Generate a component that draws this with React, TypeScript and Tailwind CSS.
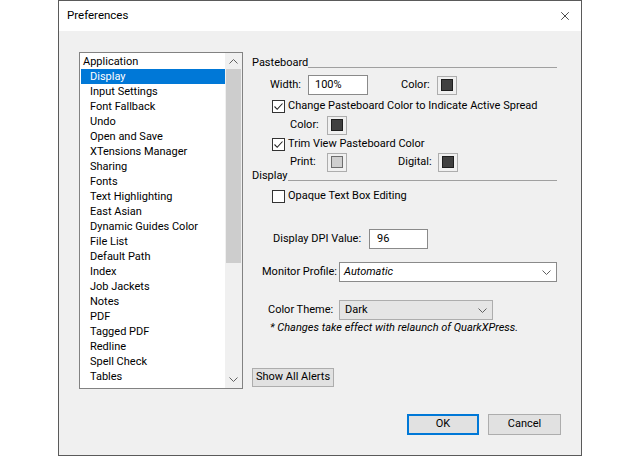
import { X } from "lucide-react";

const items = [
  "Display",
  "Input Settings",
  "Font Fallback",
  "Undo",
  "Open and Save",
  "XTensions Manager",
  "Sharing",
  "Fonts",
  "Text Highlighting",
  "East Asian",
  "Dynamic Guides Color",
  "File List",
  "Default Path",
  "Index",
  "Job Jackets",
  "Notes",
  "PDF",
  "Tagged PDF",
  "Redline",
  "Spell Check",
  "Tables",
];

function Chevron({ up = false, className = "" }: { up?: boolean; className?: string }) {
  return (
    <svg width="9" height="5" viewBox="0 0 9 5" className={className}>
      <path
        d={up ? "M0.5 4.5 L4.5 0.5 L8.5 4.5" : "M0.5 0.5 L4.5 4.5 L8.5 0.5"}
        fill="none"
        stroke="#606060"
        strokeWidth="1"
      />
    </svg>
  );
}

function Check({ checked }: { checked: boolean }) {
  return (
    <div className="w-[13px] h-[13px] border border-[#333] bg-white flex items-center justify-center">
      {checked && (
        <svg width="11" height="11" viewBox="0 0 11 11">
          <path d="M1.5 5.5 L4.2 8.3 L9.5 2.5" fill="none" stroke="#222" strokeWidth="1.1" />
        </svg>
      )}
    </div>
  );
}

function Swatch({ light = false }: { light?: boolean }) {
  return (
    <div className="w-[20px] h-[19px] border border-[#adadad] bg-[#f0f0f0] flex items-center justify-center">
      <div
        className={`w-[12px] h-[12px] border ${
          light ? "bg-[#cfcfcf] border-[#6d6d6d]" : "bg-[#404040] border-[#1e1e1e]"
        }`}
      />
    </div>
  );
}

function Header({ label }: { label: string }) {
  return (
    <div className="h-[16px] flex items-start">
      <span className="leading-[16px]">{label}</span>
      <div className="flex-1 h-[13px] border-b border-[#a0a0a0]" />
    </div>
  );
}

export default function App() {
  return (
    <div className="w-[640px] h-[457px] bg-white font-['Roboto',sans-serif] text-[11px] text-black">
      <div className="ml-[58px] w-[524px] h-[456px] border border-[#5a5a5a] flex flex-col">
        <div className="h-[30px] bg-white flex items-center justify-between pl-[8px] pr-[9px]">
          <span className="text-[11.5px]">Preferences</span>
          <X className="w-[14px] h-[14px] text-black" strokeWidth={1.2} />
        </div>

        <div className="flex-1 bg-[#f0f0f0] pt-[21px] pl-[20px] flex flex-col">
          <div className="flex">
            {/* category list */}
            <div className="w-[164px] h-[337px] border border-[#828282] bg-white flex overflow-hidden">
              <div className="flex-1 pl-[1px] pt-[1px] overflow-hidden">
                <div className="h-[15px] leading-[15px] pl-[2px]">Application</div>
                {items.map((it, i) => (
                  <div
                    key={it}
                    className={`h-[15px] leading-[15px] pl-[9px] ${
                      i === 0 ? "bg-[#0078d7] text-white" : ""
                    }`}
                  >
                    {it}
                  </div>
                ))}
              </div>
              <div className="w-[17px] bg-[#f0f0f0] flex flex-col items-center">
                <div className="h-[16px] flex items-center justify-center">
                  <Chevron up />
                </div>
                <div className="w-[15px] h-[194px] bg-[#cdcdcd]" />
                <div className="flex-1" />
                <div className="h-[17px] flex items-center justify-center">
                  <Chevron />
                </div>
              </div>
            </div>

            {/* settings */}
            <div className="ml-[9px] w-[305px] flex flex-col">
              <div className="mt-[3px]">
                <Header label="Pasteboard" />
              </div>
              <div className="mt-[4px] h-[20px] flex items-center">
                <span className="ml-[18px] w-[38px]">Width:</span>
                <div className="w-[60px] h-[20px] border border-[#8a8a8a] bg-white flex items-center pl-[6px]">
                  100%
                </div>
                <span className="ml-[33px] w-[36px]">Color:</span>
                <Swatch />
              </div>
              <div className="mt-[3px] h-[16px] flex items-center">
                <div className="ml-[20px]">
                  <Check checked />
                </div>
                <span className="ml-[3px]">Change Pasteboard Color to Indicate Active Spread</span>
              </div>
              <div className="mt-[1px] h-[20px] flex items-center">
                <span className="ml-[38px] w-[37px]">Color:</span>
                <Swatch />
              </div>
              <div className="mt-[1px] h-[16px] flex items-center">
                <div className="ml-[20px]">
                  <Check checked />
                </div>
                <span className="ml-[3px]">Trim View Pasteboard Color</span>
              </div>
              <div className="h-[20px] flex items-center">
                <span className="ml-[38px] w-[37px]">Print:</span>
                <Swatch light />
                <span className="ml-[51px] w-[40px]">Digital:</span>
                <Swatch />
              </div>
              <div className="mt-[-4px]">
                <Header label="Display" />
              </div>
              <div className="mt-[4px] h-[16px] flex items-center">
                <div className="ml-[20px]">
                  <Check checked={false} />
                </div>
                <span className="ml-[3px]">Opaque Text Box Editing</span>
              </div>
              <div className="mt-[25px] h-[20px] flex items-center">
                <span className="ml-[21px] w-[96px]">Display DPI Value:</span>
                <div className="w-[59px] h-[20px] border border-[#8a8a8a] bg-white flex items-center pl-[7px]">
                  96
                </div>
              </div>
              <div className="mt-[13px] h-[20px] flex items-center">
                <span className="ml-[10px] w-[77px]">Monitor Profile:</span>
                <div className="w-[218px] h-[20px] border border-[#8a8a8a] bg-white flex items-center justify-between pl-[4px] pr-[5px]">
                  <span className="italic">Automatic</span>
                  <Chevron />
                </div>
              </div>
              <div className="mt-[18px] h-[20px] flex items-center">
                <span className="ml-[16px] w-[71px]">Color Theme:</span>
                <div className="w-[154px] h-[20px] border border-[#adadad] bg-[#e5e5e5] flex items-center justify-between pl-[5px] pr-[5px]">
                  <span>Dark</span>
                  <Chevron />
                </div>
              </div>
              <div className="h-[16px] flex items-center pl-[18px] italic">
                * Changes take effect with relaunch of QuarkXPress.
              </div>
              <div className="mt-[32px]">
                <button className="h-[19px] px-[3px] border border-[#adadad] bg-[#e1e1e1] flex items-center">
                  Show All Alerts
                </button>
              </div>
            </div>
          </div>

          <div className="mt-[25px] pr-[20px] flex justify-end gap-[9px]">
            <button className="w-[72px] h-[21px] border-2 border-[#0078d7] bg-[#e1e1e1] flex items-center justify-center">
              OK
            </button>
            <button className="w-[73px] h-[21px] border border-[#adadad] bg-[#e1e1e1] flex items-center justify-center">
              Cancel
            </button>
          </div>
        </div>
      </div>
    </div>
  );
}
